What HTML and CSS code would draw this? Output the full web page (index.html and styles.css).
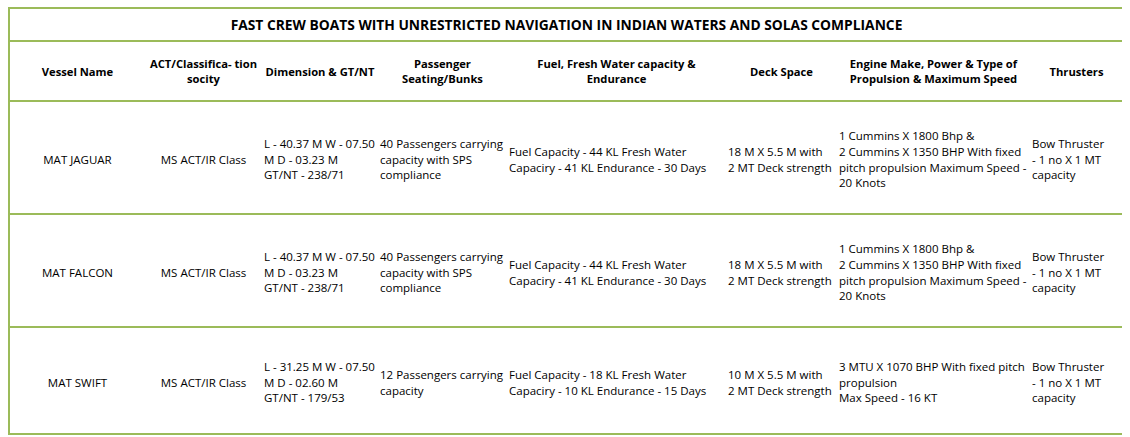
FILE: index.html
```html
<!DOCTYPE html>
<html>
<head>
<meta charset="utf-8">
<link rel="stylesheet" href="styles.css">
</head>
<body>
<table class="specs">
  <colgroup>
    <col class="c1"><col class="c2"><col class="c3"><col class="c4"><col class="c5"><col class="c6"><col class="c7"><col class="c8">
  </colgroup>
  <thead>
    <tr class="title-row"><th colspan="8">FAST CREW BOATS WITH UNRESTRICTED NAVIGATION IN INDIAN WATERS AND SOLAS COMPLIANCE</th></tr>
    <tr class="head-row">
      <th>Vessel Name</th>
      <th>ACT/Classifica- tion<br>socity</th>
      <th>Dimension &amp; GT/NT</th>
      <th>Passenger<br>Seating/Bunks</th>
      <th>Fuel, Fresh Water capacity &amp;<br>Endurance</th>
      <th>Deck Space</th>
      <th>Engine Make, Power &amp; Type of<br>Propulsion &amp; Maximum Speed</th>
      <th>Thrusters</th>
    </tr>
  </thead>
  <tbody>
    <tr class="row r1">
      <td class="ctr">MAT JAGUAR</td>
      <td class="ctr">MS ACT/IR Class</td>
      <td>L - 40.37 M W - 07.50<br>M D - 03.23 M<br>GT/NT - 238/71</td>
      <td>40 Passengers carrying<br>capacity with SPS<br>compliance</td>
      <td>Fuel Capacity - 44 KL Fresh Water<br>Capaciry - 41 KL Endurance - 30 Days</td>
      <td>18 M X 5.5 M with<br>2 MT Deck strength</td>
      <td>1 Cummins X 1800 Bhp &amp;<br>2 Cummins X 1350 BHP With fixed<br>pitch propulsion Maximum Speed -<br>20 Knots</td>
      <td>Bow Thruster<br>- 1 no X 1 MT<br>capacity</td>
    </tr>
    <tr class="row r2">
      <td class="ctr">MAT FALCON</td>
      <td class="ctr">MS ACT/IR Class</td>
      <td>L - 40.37 M W - 07.50<br>M D - 03.23 M<br>GT/NT - 238/71</td>
      <td>40 Passengers carrying<br>capacity with SPS<br>compliance</td>
      <td>Fuel Capacity - 44 KL Fresh Water<br>Capaciry - 41 KL Endurance - 30 Days</td>
      <td>18 M X 5.5 M with<br>2 MT Deck strength</td>
      <td>1 Cummins X 1800 Bhp &amp;<br>2 Cummins X 1350 BHP With fixed<br>pitch propulsion Maximum Speed -<br>20 Knots</td>
      <td>Bow Thruster<br>- 1 no X 1 MT<br>capacity</td>
    </tr>
    <tr class="row r3">
      <td class="ctr">MAT SWIFT</td>
      <td class="ctr">MS ACT/IR Class</td>
      <td>L - 31.25 M W - 07.50<br>M D - 02.60 M<br>GT/NT - 179/53</td>
      <td>12 Passengers carrying<br>capacity</td>
      <td>Fuel Capacity - 18 KL Fresh Water<br>Capaciry - 10 KL Endurance - 15 Days</td>
      <td>10 M X 5.5 M with<br>2 MT Deck strength</td>
      <td>3 MTU X 1070 BHP With fixed pitch<br>propulsion<br>Max Speed - 16 KT</td>
      <td>Bow Thruster<br>- 1 no X 1 MT<br>capacity</td>
    </tr>
  </tbody>
</table>
</body>
</html>
```

FILE: styles.css
```css
html, body {
  background: #ffffff;
}
body {
  margin: 7px 8px;
  font-family: "Open Sans", Lato, "Liberation Sans", sans-serif;
  color: #000000;
}
.specs {
  width: 1115px;
  table-layout: fixed;
  border-collapse: collapse;
  border: 2px solid #9bbb59;
}
.c1 { width: 136px; }
.c2 { width: 117px; }
.c3 { width: 116px; }
.c4 { width: 129px; }
.c5 { width: 219px; }
.c6 { width: 111px; }
.c7 { width: 193px; }
.c8 { width: 94px; }

.specs th, .specs td {
  padding: 0 2px;
  white-space: nowrap;
  overflow: visible;
}
.title-row th {
  height: 31px;
  font-size: 13.8px;
  font-weight: bold;
  text-align: center;
  border-bottom: 2px solid #9bbb59;
  padding-top: 0;
}
.head-row th {
  height: 58px;
  font-size: 11.2px;
  line-height: 15px;
  font-weight: bold;
  text-align: center;
  vertical-align: middle;
  border-bottom: 2px solid #9bbb59;
  padding-top: 0;
}
.row td {
  font-size: 11.5px;
  line-height: 15.6px;
  vertical-align: middle;
  text-align: left;
  border-bottom: 2px solid #9bbb59;
  padding-top: 4px;
}
.row td.ctr {
  text-align: center;
}
.r1 td { height: 107px; }
.r2 td { height: 107px; }
.r3 td { height: 101px; }
```
